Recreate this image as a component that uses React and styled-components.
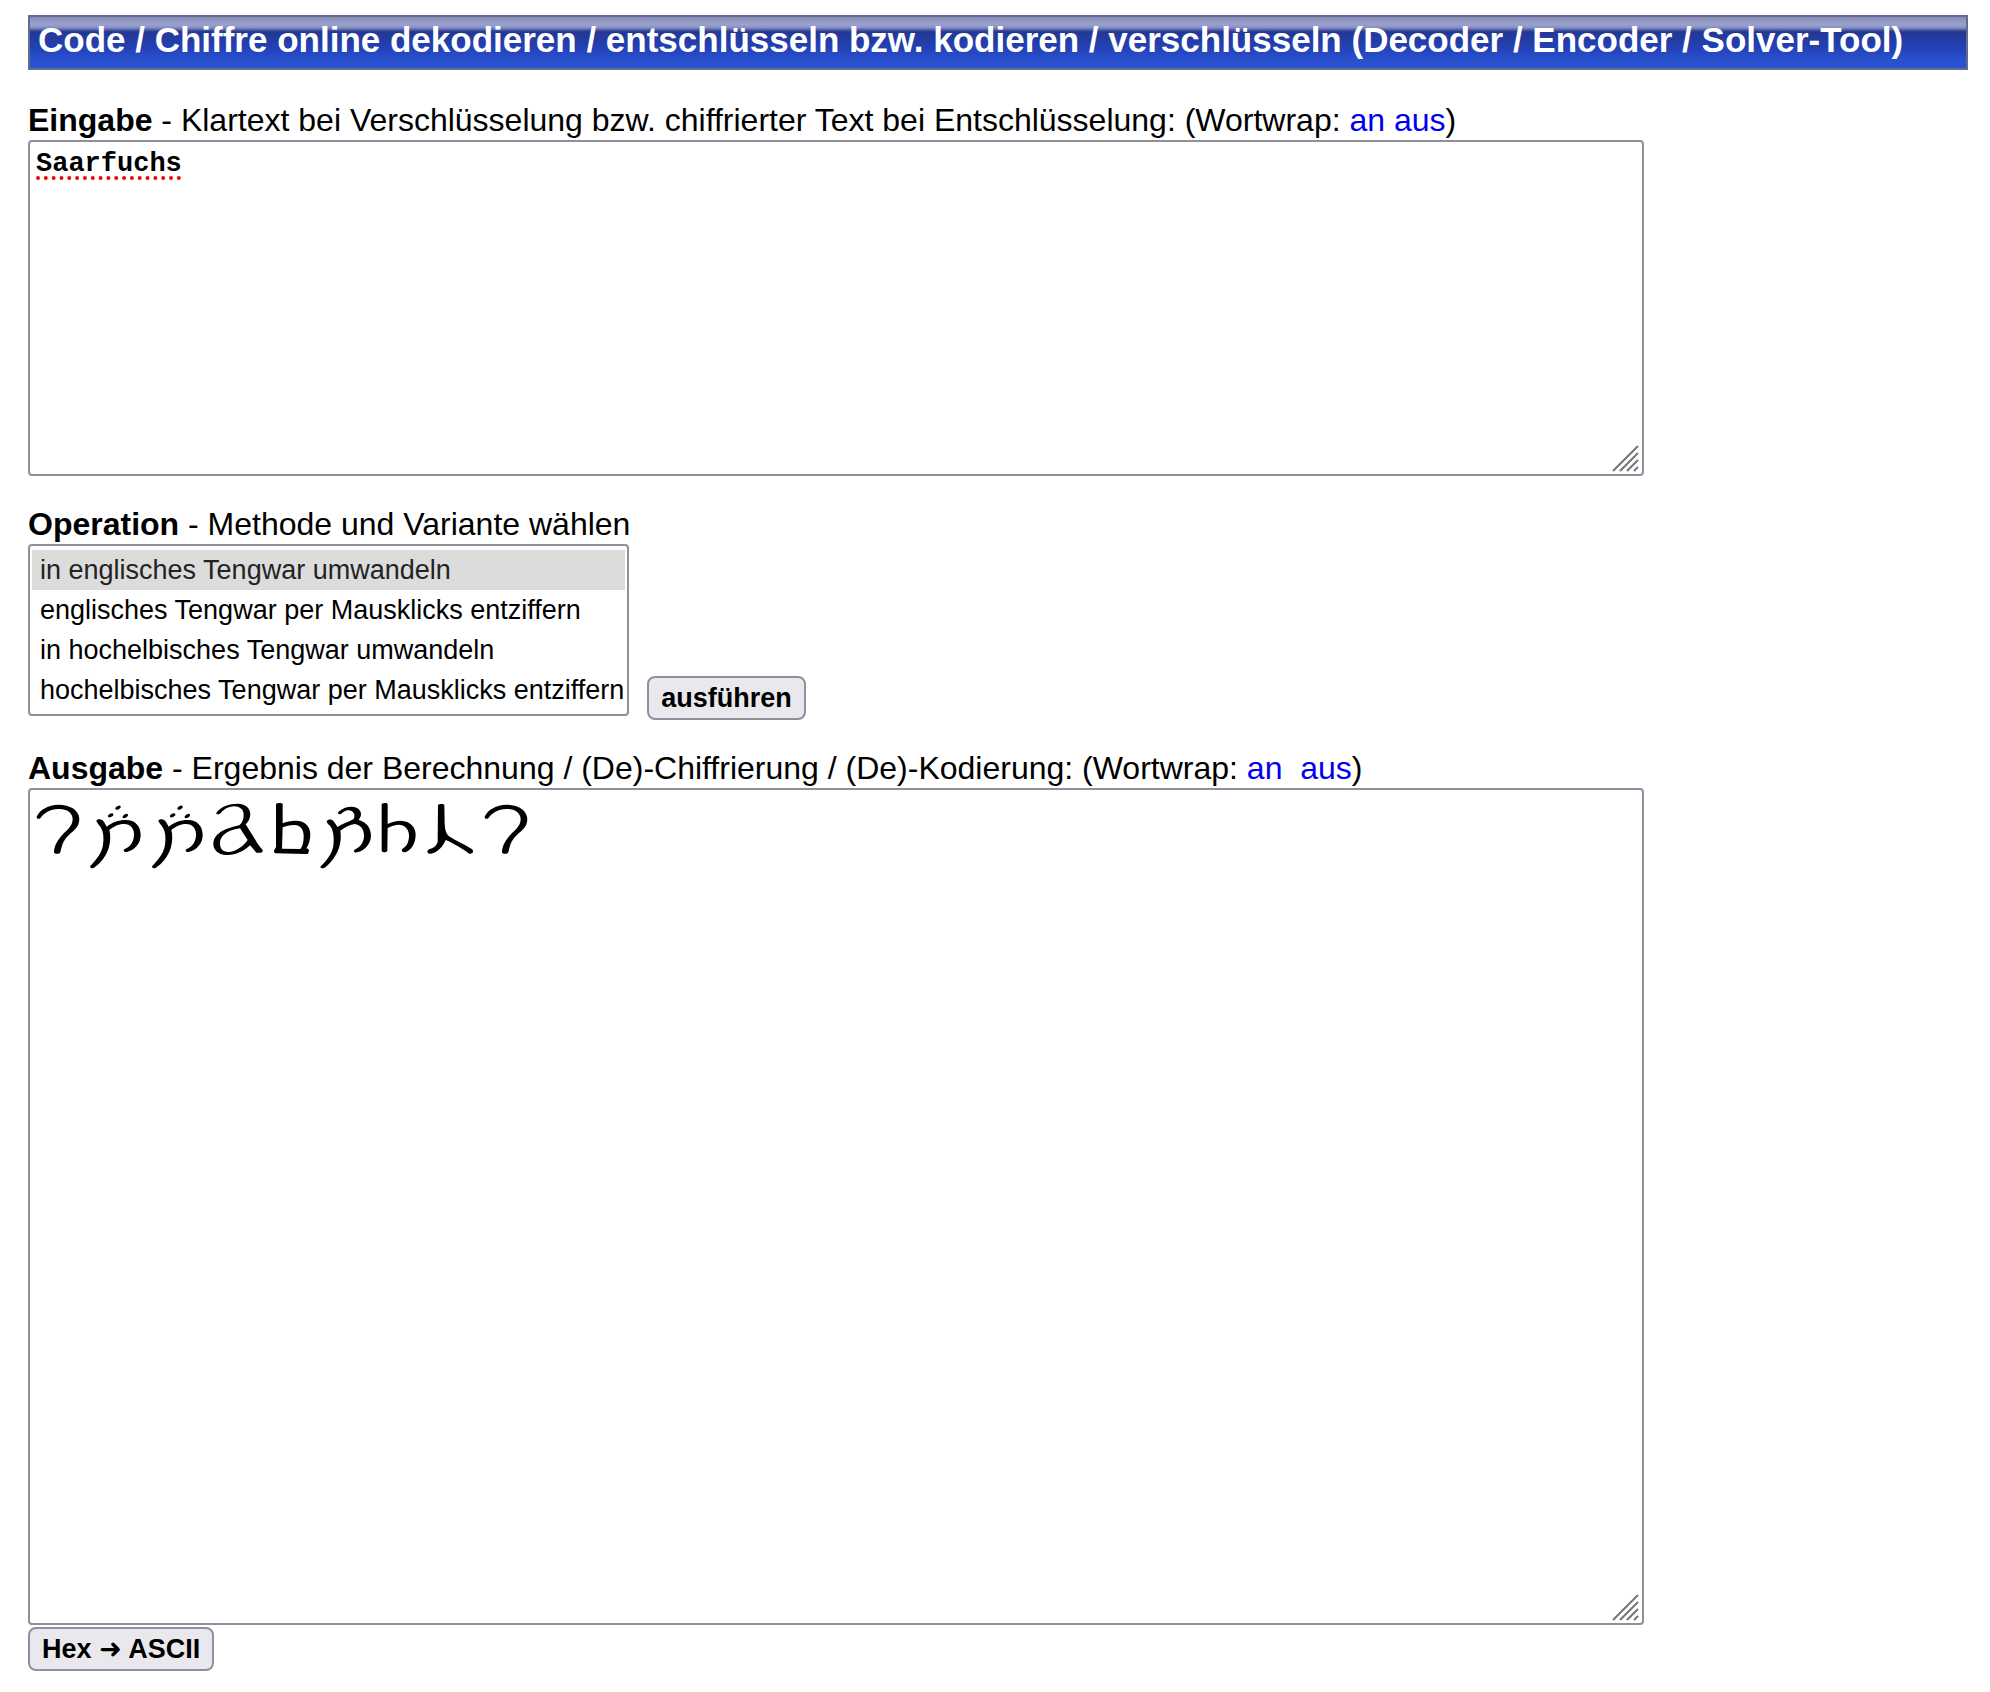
import React, { useState } from "react";
import styled, { createGlobalStyle, css } from "styled-components";

const GlobalStyle = createGlobalStyle`
  * {
    box-sizing: border-box;
  }
  body {
    margin: 0;
    background-color: #fff;
    color: #000;
    font-family: "Liberation Sans", Arial, Helvetica, sans-serif;
    font-size: 32px;
    line-height: 36px;
  }
`;

const grip =
  "data:image/svg+xml,%3Csvg xmlns='http://www.w3.org/2000/svg' width='30' height='30'%3E%3Cpath d='M1 27L26 2M8 27L26 9M15 27L26 16M22 27L26 23' stroke='%23757575' stroke-width='2'/%3E%3C/svg%3E";

const Page = styled.main`
  padding: 15px 22px 20px 28px;
`;

const Title = styled.h1`
  margin: 0 0 32px;
  padding: 0 8px 5px;
  border: 2px solid #646b8e;
  background: linear-gradient(
    #858bb6 0%,
    #9aa1cc 14%,
    #8d95c4 20%,
    #233793 29%,
    #2342b8 62%,
    #2a52cf 85%,
    #2a52cf 100%
  );
  color: #fff;
  font-size: 35px;
  line-height: 46px;
`;

const Form = styled.form`
  display: flex;
  flex-direction: column;
  gap: 30px;
`;

const Section = styled.section`
  display: flex;
  flex-direction: column;
  align-items: flex-start;
  gap: 2px;
`;

const Caption = styled.div`
  white-space: pre-wrap;
`;

const WrapLink = styled.a`
  color: #0000ee;
  text-decoration: none;
`;

const field = css`
  display: block;
  width: 100%;
  max-width: 1616px;
  border: 2px solid #8f8f9d;
  border-radius: 4px;
  background: #fff url("${grip}") no-repeat right bottom;
  resize: both;
  overflow: auto;

  &::-webkit-resizer {
    background: transparent;
  }
`;

const Input = styled.textarea`
  ${field}
  padding: 6px;
  color: #000;
  font: bold 27px/32px "Liberation Mono", "Courier New", monospace;
  text-decoration: underline dotted #e00b0b 4px;
  text-underline-offset: 5px;
  text-decoration-skip-ink: none;
`;

const Output = styled.div`
  ${field}
  min-height: 837px;
  padding: 10px 6px;
`;

const Signs = styled.div`
  display: flex;
  flex-wrap: wrap;
  gap: 9px;
`;

const SignSvg = styled.svg`
  display: block;
  height: 70px;
  fill: #000;
  fill-rule: evenodd;
`;

const Row = styled.div`
  display: flex;
  align-items: flex-end;
  gap: 18px;
`;

const MethodList = styled.select`
  margin-bottom: 4px;
  padding: 4px 2px;
  border: 2px solid #8f8f9d;
  border-radius: 4px;
  background-color: #fff;
  font: 27px "Liberation Sans", Arial, sans-serif;
  overflow: hidden;

  option {
    height: 40px;
    min-height: 40px;
    padding: 5px 1px 0 8px;
    color: #000;
  }
  option:checked {
    background: #dcdcdc linear-gradient(#dcdcdc, #dcdcdc);
    color: #232323;
  }
`;

const Button = styled.button`
  padding: 2px 12px;
  border: 2px solid #8f8f9d;
  border-radius: 8px;
  background-color: #e9e9ed;
  color: #000;
  font: bold 27px/36px "Liberation Sans", "DejaVu Sans", sans-serif;
  cursor: pointer;
`;

const methods = [
  "in englisches Tengwar umwandeln",
  "englisches Tengwar per Mausklicks entziffern",
  "in hochelbisches Tengwar umwandeln",
  "hochelbisches Tengwar per Mausklicks entziffern",
];

// Tengwar signs, three units per pixel
const signs = {
  hook: {
    x: 48,
    width: 44,
    d: "M50 110C60 88 85 75 115 74C150 74 178 90 178 118C178 145 155 155 140 172C125 190 125 205 121 217C118 223 104 223 102 217C102 200 110 185 122 170C138 152 158 140 158 118C158 98 140 86 115 87C90 88 75 97 62 113C57 119 50 117 50 110Z",
  },
  dotted: {
    x: 207,
    width: 53,
    d: "M229 122C232 116 243 116 249 122C254 128 258 135 260 140C275 128 295 120 318 120C345 120 362 138 362 165C362 190 345 210 320 216C312 218 308 210 314 207C332 200 342 185 342 163C342 145 332 132 312 132C295 132 280 140 268 150C272 165 272 185 266 205C258 230 240 252 222 263C214 267 208 263 211 258C230 238 245 220 249 195C252 172 250 155 243 143C239 135 231 130 229 122Z",
    dots: [
      [294, 83],
      [272, 106],
      [316, 108],
    ],
  },
  loop: {
    x: 576,
    width: 51,
    d: "M586 99C598 80 625 71 650 71C676 71 688 86 688 104C687 118 679 128 674 133L702 178C708 190 716 200 723 208C730 216 720 220 706 218C700 211 694 204 687 196C670 212 648 225 618 225C592 225 577 210 577 192C578 165 600 148 655 136C664 128 668 118 668 104C668 88 655 79 640 79C620 80 610 88 600 98C594 104 584 104 586 99ZM657 145C615 152 597 168 597 190C597 207 606 216 622 216C645 215 665 200 680 180Z",
  },
  closed: {
    x: -24,
    width: 38,
    d: "M-15 72C-10 68 2 68 5 72L5 130C15 125 30 122 45 122C72 122 88 140 88 163C88 182 82 196 76 205C84 206 86 212 82 218C82 222 78 222 74 222L-16 220C-22 219 -22 210 -18 207L-15 200ZM5 142L3 206L58 207C66 198 68 185 68 167C68 148 58 135 40 135C25 135 14 138 5 142Z",
  },
  curled: {
    x: 120,
    width: 52,
    d: "M140 124C144 117 154 117 160 123C166 130 170 136 172 141C185 133 205 126 220 118C224 112 224 106 222 101C219 93 210 90 202 91C195 92 190 96 184 101C178 105 171 101 175 96C186 85 200 80 215 80C234 80 244 92 243 104C242 111 238 116 236 120C260 126 273 145 273 168C272 192 254 212 232 217C224 219 218 213 224 209C242 200 252 188 252 165C251 145 240 135 225 132C210 134 195 142 181 152C184 170 182 190 176 206C168 228 152 250 134 263C126 267 120 264 122 259C142 240 156 220 160 198C163 175 160 155 154 143C149 135 141 132 140 124Z",
  },
  open: {
    x: 303,
    width: 37,
    d: "M305 72C310 68 320 68 323 72L323 132C335 126 348 122 362 122C392 123 407 142 407 165C406 190 395 210 376 217C368 218 362 211 368 206C382 198 387 185 387 165C386 147 375 134 355 134C342 135 331 139 323 144L322 213C318 218 308 218 305 213Z",
  },
  forked: {
    x: 440,
    width: 48,
    d: "M473 75C477 71 490 71 492 75L493 130C494 150 497 160 505 168C525 182 550 192 573 206C582 212 579 220 568 222C550 208 520 190 496 180C488 200 472 217 452 221C440 223 438 213 446 208C460 205 468 198 472 186Z",
  },
};

const result = [
  "hook",
  "dotted",
  "dotted",
  "loop",
  "closed",
  "curled",
  "open",
  "forked",
  "hook",
];

const Sign = ({ name }) => {
  const { x, width, d, dots } = signs[name];
  return (
    <SignSvg
      width={width}
      height="70"
      viewBox={`${x} 60 ${width * 3} 210`}
      aria-hidden="true"
    >
      <path d={d} />
      {dots &&
        dots.map(([cx, cy]) => (
          <ellipse
            key={cx}
            cx={cx}
            cy={cy}
            rx="9"
            ry="5"
            transform={`rotate(-28 ${cx} ${cy})`}
          />
        ))}
    </SignSvg>
  );
};

const App = () => {
  const [text, setText] = useState("Saarfuchs");
  const [method, setMethod] = useState(methods[0]);
  const [wrapIn, setWrapIn] = useState("soft");

  const changeWrap = (e, value) => {
    e.preventDefault();
    setWrapIn(value);
  };

  return (
    <>
      <GlobalStyle />
      <Page>
        <Title>
          Code / Chiffre online dekodieren / entschlüsseln bzw. kodieren /
          verschlüsseln (Decoder / Encoder / Solver-Tool)
        </Title>
        <Form onSubmit={(e) => e.preventDefault()}>
          <Section>
            <Caption>
              <label htmlFor="eingabe">
                <b>Eingabe</b> - Klartext bei Verschlüsselung bzw. chiffrierter
                Text bei Entschlüsselung:
              </label>{" "}
              (Wortwrap:{" "}
              <WrapLink href="#an" onClick={(e) => changeWrap(e, "soft")}>
                an
              </WrapLink>{" "}
              <WrapLink href="#aus" onClick={(e) => changeWrap(e, "off")}>
                aus
              </WrapLink>
              )
            </Caption>
            <Input
              id="eingabe"
              rows={10}
              wrap={wrapIn}
              value={text}
              onChange={(e) => setText(e.target.value)}
            />
          </Section>

          <Section>
            <Caption as="label" htmlFor="operation">
              <b>Operation</b> - Methode und Variante wählen
            </Caption>
            <Row>
              <MethodList
                id="operation"
                size={4}
                value={method}
                onChange={(e) => setMethod(e.target.value)}
              >
                {methods.map((item) => (
                  <option key={item}>{item}</option>
                ))}
              </MethodList>
              <Button type="submit">ausführen</Button>
            </Row>
          </Section>

          <Section>
            <Caption>
              <span id="ausgabe">
                <b>Ausgabe</b> - Ergebnis der Berechnung / (De)-Chiffrierung /
                (De)-Kodierung:
              </span>{" "}
              (Wortwrap: <WrapLink href="#ausgabe">an</WrapLink>
              {"  "}
              <WrapLink href="#ausgabe">aus</WrapLink>)
            </Caption>
            <Output role="textbox" aria-readonly="true" aria-labelledby="ausgabe">
              <Signs>
                {result.map((name, index) => (
                  <Sign key={index} name={name} />
                ))}
              </Signs>
            </Output>
            <Button type="button">Hex ➜ ASCII</Button>
          </Section>
        </Form>
      </Page>
    </>
  );
};

export default App;
